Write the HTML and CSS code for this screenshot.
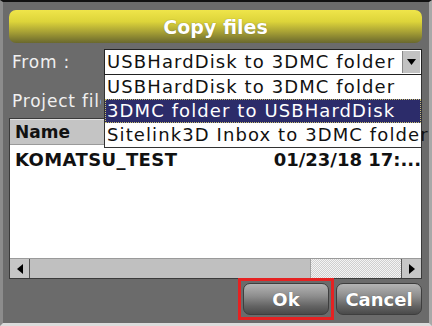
FILE: index.html
```html
<!DOCTYPE html>
<html>
<head>
<meta charset="utf-8">
<link rel="stylesheet" href="styles.css">
</head>
<body>
<div class="window">
  <div class="title">Copy files</div>
  <div class="from-row">
    <div class="label from-label">From :</div>
    <div class="select-wrap">
      <div class="select">
        <span class="select-value">USBHardDisk to 3DMC folder</span>
        <span class="select-btn"><svg width="9" height="6" viewBox="0 0 9 6"><path d="M0 0H9L4.5 6Z" fill="#000"/></svg></span>
      </div>
      <div class="dropdown">
        <div class="item">USBHardDisk to 3DMC folder</div>
        <div class="item selected">3DMC folder to USBHardDisk</div>
        <div class="item">Sitelink3D Inbox to 3DMC folder</div>
      </div>
    </div>
  </div>
  <div class="label project-label">Project files :</div>
  <div class="table">
    <div class="thead">
      <div class="th th-name">Name</div>
      <div class="th th-date"></div>
    </div>
    <div class="tbody">
      <div class="row">
        <span class="cell-name">KOMATSU_TEST</span>
        <span class="cell-date">01/23/18 17:...</span>
      </div>
    </div>
    <div class="hscroll">
      <span class="sb-btn"><svg width="6" height="10" viewBox="0 0 6 10"><path d="M6 0V10L0 5Z" fill="#000"/></svg></span>
      <span class="sb-thumb"></span>
      <span class="sb-track"></span>
      <span class="sb-btn"><svg width="6" height="10" viewBox="0 0 6 10"><path d="M0 0V10L6 5Z" fill="#000"/></svg></span>
    </div>
  </div>
  <div class="buttons">
    <span class="focus-ring"><button class="btn">Ok</button></span>
    <button class="btn">Cancel</button>
  </div>
</div>
</body>
</html>
```
FILE: styles.css
```css
html, body {
  margin: 0;
  padding: 0;
  overflow: hidden;
  background: #6b6b6b;
}
.window {
  width: 432px;
  height: 326px;
  box-sizing: border-box;
  border-top: 2px solid #111;
  border-left: 3px solid #8c8c8c;
  border-right: 3px solid #a8a8a8;
  border-bottom: 3px solid #dcdcdc;
  background: #6b6b6b;
  padding: 8px 7px 0 6px;
  display: flex;
  flex-direction: column;
  font-family: "DejaVu Sans", sans-serif;
}
.title {
  height: 33px;
  border-radius: 7px;
  background: linear-gradient(#efe54a 0%, #ddd43a 35%, #aaa335 65%, #6a682e 100%);
  color: #fff;
  font-weight: bold;
  font-size: 19px;
  display: flex;
  align-items: center;
  justify-content: center;
  text-shadow: 0 0 1px rgba(60,60,20,0.6);
  flex: none;
}
.label {
  color: #f0f0f0;
  font-size: 17px;
  letter-spacing: 0.8px;
  white-space: nowrap;
}
.from-row {
  display: flex;
  align-items: center;
  margin-top: 6px;
  height: 26px;
  flex: none;
}
.from-label {
  width: 95px;
  padding-left: 3px;
  box-sizing: border-box;
  flex: none;
}
.select-wrap {
  position: relative;
  flex: 1;
  height: 26px;
}
.select {
  height: 26px;
  box-sizing: border-box;
  border: 1px solid #222;
  background: #fff;
  display: flex;
  align-items: stretch;
}
.select-value {
  flex: 1;
  font-size: 18px;
  letter-spacing: 1.1px;
  color: #111;
  padding-left: 2px;
  line-height: 24px;
  white-space: nowrap;
  overflow: hidden;
}
.select-btn {
  width: 17px;
  margin: 1px 1px 1px 0;
  background: #c2c2c2;
  border-left: 1px solid #888;
  display: flex;
  align-items: center;
  justify-content: center;
}
.dropdown {
  position: absolute;
  top: 26px;
  left: 0;
  right: 0;
  background: #fff;
  border: 1px solid #333;
  border-top: none;
  z-index: 5;
}
.item {
  height: 24px;
  line-height: 24px;
  font-size: 18px;
  letter-spacing: 1.1px;
  color: #111;
  padding-left: 2px;
  white-space: nowrap;
  box-sizing: border-box;
}
.item.selected {
  background: #2c2c6a;
  color: #fff;
  outline: 1px dotted #c8c070;
  outline-offset: -1px;
}
.project-label {
  margin-top: 17px;
  height: 19px;
  line-height: 19px;
  margin-bottom: 7px;
  padding-left: 3px;
  width: 92px;
  box-sizing: border-box;
  overflow: hidden;
  flex: none;
}
.table {
  height: 161px;
  box-sizing: border-box;
  border: 1px solid #3a3a3a;
  background: #fff;
  display: flex;
  flex-direction: column;
  flex: none;
}
.thead {
  height: 26px;
  background: #c4c4c4;
  border-bottom: 1px solid #9a9a9a;
  border-top: 1px solid #e2e2e2;
  display: flex;
  flex: none;
  box-sizing: border-box;
}
.th {
  font-size: 17px;
  color: #111;
  line-height: 24px;
  padding-left: 5px;
  font-weight: bold;
}
.th-name {
  width: 260px;
  border-right: 1px solid #999;
}
.tbody {
  flex: 1;
  padding-top: 3px;
}
.row {
  display: flex;
  height: 22px;
  align-items: center;
  font-size: 18px;
  font-weight: bold;
  color: #111;
  white-space: nowrap;
}
.cell-name {
  padding-left: 5px;
  flex: 1;
  letter-spacing: 0.4px;
}
.cell-date {
  letter-spacing: 0px;
}
.hscroll {
  height: 20px;
  display: flex;
  border-top: 1px solid #9a9a9a;
  flex: none;
  box-sizing: border-box;
  background: #c2c2c2;
}
.sb-btn {
  width: 20px;
  box-sizing: border-box;
  background: #c6c6c6;
  border-right: 1px solid #555;
  display: flex;
  align-items: center;
  justify-content: center;
}
.sb-btn:last-child {
  border-right: none;
  border-left: 1px solid #555;
}
.sb-thumb {
  width: 281px;
  background: #c0c0c0;
  border-right: 1px solid #a0a0a0;
  box-sizing: border-box;
}
.sb-track {
  flex: 1;
  background: repeating-conic-gradient(#cfcfcf 0 25%, #f4f4f4 0 50%) 0 0 / 2px 2px;
}
.buttons {
  display: flex;
  justify-content: flex-end;
  gap: 7px;
  margin-top: 4px;
  flex: none;
}
.focus-ring {
  display: flex;
  outline: 3px solid #e52222;
  outline-offset: 2px;
}
.btn {
  width: 86px;
  height: 32px;
  border-radius: 7px;
  border: 1px solid #3e3e3e;
  background: linear-gradient(#b4b4b4 0%, #8e8e8e 40%, #626262 75%, #4a4a4a 100%);
  color: #fff;
  font-family: "DejaVu Sans", sans-serif;
  font-weight: bold;
  font-size: 18px;
  padding: 0;
  text-shadow: 0 0 1px rgba(0,0,0,0.4);
}
```
